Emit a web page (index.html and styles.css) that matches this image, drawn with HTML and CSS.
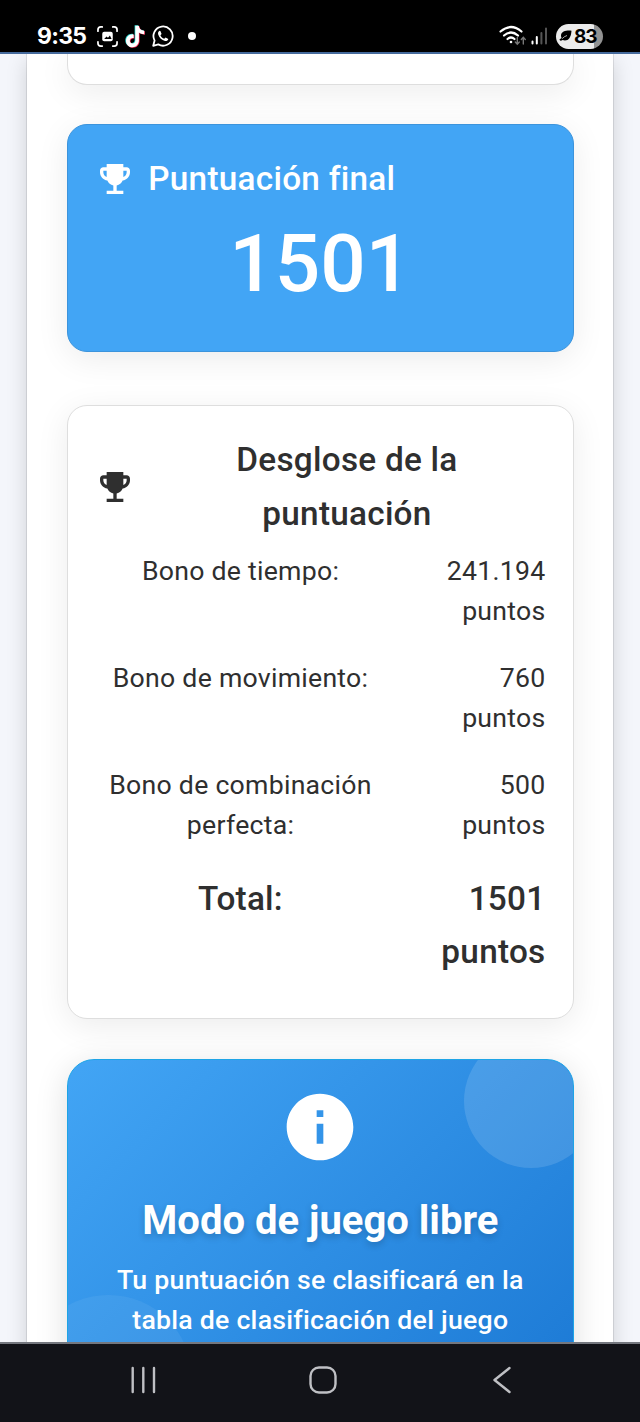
FILE: index.html
```html
<!DOCTYPE html>
<html lang="es">
<head>
<meta charset="utf-8">
<title>Puntuación final</title>
<link rel="stylesheet" href="styles.css">
</head>
<body>
<div class="phone">
  <header class="status">
    <div class="status-left">
      <span class="clock">9:35</span>
      <svg class="s-shot" viewBox="0 0 22 22" fill="none" stroke="#fff" stroke-width="1.8" stroke-linecap="round">
        <path d="M1 5.500V4q0-3 3-3h1.500M16.500 1H18q3 0 3 3v1.500M21 16.500V18q0 3-3 3h-1.500M5.500 21H4q-3 0-3-3v-1.500"/>
        <rect x="5.500" y="6" width="11" height="10" rx="2" fill="#fff" stroke="none"/>
        <path d="M7.500 13.500l2.500-2.500 1.500 1.200 2-2.200 1.800 3.500z" fill="#000" stroke="none"/>
      </svg>
      <svg class="s-tiktok" viewBox="0 0 20 23">
        <path fill="#25d9d2" d="M9.600.2h3.500c.2 2.700 2 4.700 5.400 5v3.500c-2 0-3.800-.7-5.300-1.700v7.800c0 4.200-3 7-6.500 7S.3 19 .3 15.400c0-4 3.400-7 7.600-6.500v3.700c-2.100-.6-3.800.8-3.800 2.700 0 1.700 1.300 2.800 2.700 2.800 1.600 0 2.800-1.200 2.800-3z"/>
        <path fill="#fe2c55" d="M11 1.200h3.500c.2 2.700 2 4.700 5.400 5v3.500c-2 0-3.800-.7-5.300-1.700v7.800c0 4.200-3 7-6.500 7S1.700 20 1.700 16.400c0-4 3.400-7 7.600-6.500v3.700c-2.100-.6-3.800.8-3.800 2.700 0 1.700 1.300 2.800 2.700 2.800 1.600 0 2.800-1.200 2.800-3z"/>
        <path fill="#fff" d="M10.300.7h3.500c.2 2.700 2 4.700 5.400 5v3.500c-2 0-3.800-.7-5.300-1.700v7.800c0 4.200-3 7-6.500 7S1 19.500 1 15.900c0-4 3.400-7 7.600-6.500v3.700c-2.100-.6-3.800.8-3.800 2.700 0 1.700 1.300 2.800 2.700 2.800 1.600 0 2.800-1.200 2.800-3z"/>
      </svg>
      <svg class="s-wa" viewBox="0 0 22 22">
        <path d="M1.200 20.800l1.400-5.200a9.600 9.600 0 1 1 3.700 3.800z" fill="none" stroke="#fff" stroke-width="1.800" stroke-linejoin="round"/>
        <path d="M7.500 5.800c-1.200.7-1.800 2-1.300 3.700 1 3.200 3.600 5.700 6.800 6.500 1.500.3 3-.5 3.300-2.100l-2.700-1.500-1.400 1.400c-1.700-.7-3.100-2-3.800-3.600l1.200-1.300-1.200-2.900z" fill="#fff"/>
      </svg>
      <span class="dot"></span>
    </div>
    <div class="status-right">
      <svg class="s-wifi" viewBox="0 0 28 22" fill="none" stroke="#fff" stroke-width="2.200" stroke-linecap="round">
        <path d="M1.500 6.500Q12 -2.500 22.500 6.500M5 10.500Q12 4.500 19 10.500M8.500 14Q12 11 15.500 14"/>
        <circle cx="12" cy="17" r="1.300" fill="#fff" stroke="none"/>
        <path d="M18.300 12.500v6.500M16.300 17l2 2.200 2-2.200M24.300 19v-6.500M22.300 14.500l2-2.200 2 2.200" stroke="#777" stroke-width="1.400"/>
      </svg>
      <svg class="s-signal" viewBox="0 0 17 18" stroke-linecap="round" stroke-width="2">
        <path d="M1.500 14.500v2M5.800 10v6.500" stroke="#fff"/>
        <path d="M10.400 6v10.500M15 1.500v15" stroke="#555"/>
      </svg>
      <div class="battery">
        <svg class="leaf" viewBox="0 0 13 12"><path d="M12.500.7C7 .2 2.500 1.500 2 5.200c-.1 1.200.2 2 .6 2.800L.4 9.500q.5 2 3.200.5C8 11.600 12 9 12.500.7z" fill="#000"/><path d="M3.200 8.700Q5 6.500 8 5.500" stroke="#eee" stroke-width=".7" fill="none"/></svg>
        <span>83</span>
      </div>
    </div>
  </header>

  <main class="screen">
    <div class="paper">
      <section class="card card-previous"></section>

      <section class="card card-final">
        <div class="heading">
          <svg class="trophy" viewBox="0 0 24 24"><path d="M19 5h-2V3H7v2H5c-1.100 0-2 .9-2 2v1c0 2.550 1.920 4.630 4.390 4.940.63 1.500 1.980 2.630 3.610 2.960V19H7v2h10v-2h-4v-3.100c1.630-.33 2.980-1.460 3.610-2.960C19.080 12.630 21 10.550 21 8V7c0-1.100-.9-2-2-2zM5 8V7h2v3.820C5.840 10.400 5 9.300 5 8zm14 0c0 1.300-.84 2.400-2 2.820V7h2v1z"/></svg>
          <h2 class="title">Puntuación final</h2>
        </div>
        <div class="score">1501</div>
      </section>

      <section class="card card-breakdown">
        <div class="heading">
          <svg class="trophy" viewBox="0 0 24 24"><path d="M19 5h-2V3H7v2H5c-1.100 0-2 .9-2 2v1c0 2.550 1.920 4.630 4.390 4.940.63 1.500 1.980 2.630 3.610 2.960V19H7v2h10v-2h-4v-3.100c1.630-.33 2.980-1.460 3.610-2.960C19.080 12.630 21 10.550 21 8V7c0-1.100-.9-2-2-2zM5 8V7h2v3.820C5.840 10.400 5 9.300 5 8zm14 0c0 1.300-.84 2.400-2 2.820V7h2v1z"/></svg>
          <h2 class="title title-wide">Desglose de la puntuación</h2>
        </div>
        <div class="rows">
          <span class="label">Bono de tiempo:</span><span class="value">241.194 puntos</span>
          <span class="label">Bono de movimiento:</span><span class="value">760<br>puntos</span>
          <span class="label">Bono de combinación perfecta:</span><span class="value">500<br>puntos</span>
          <span class="label total">Total:</span><span class="value total">1501 puntos</span>
        </div>
      </section>

      <section class="card card-mode">
        <span class="bubble bubble-top"></span>
        <span class="bubble bubble-bottom"></span>
        <svg class="info" viewBox="0 0 24 24"><path d="M12 2C6.480 2 2 6.480 2 12s4.480 10 10 10 10-4.480 10-10S17.520 2 12 2zm1 15h-2v-6h2v6zm0-8h-2V7h2v2z"/></svg>
        <h2 class="mode-title">Modo de juego libre</h2>
        <p class="mode-text">Tu puntuación se clasificará en la tabla de clasificación del juego</p>
      </section>
    </div>
  </main>

  <nav class="navbar">
    <svg viewBox="0 0 28 28"><path d="M3.700 2v24M14.300 2v24M25 2v24"/></svg>
    <svg viewBox="0 0 28 28"><rect x="1.500" y="1.500" width="25" height="25" rx="8.500"/></svg>
    <svg viewBox="0 0 28 28"><path d="M21.500 2L6.500 14l15 12"/></svg>
  </nav>
</div>
</body>
</html>
```
FILE: styles.css
```css
* { box-sizing: border-box; }

body {
  margin: 0;
  font-family: Roboto, "Liberation Sans", sans-serif;
  color: #2f2f2f;
  background: #f4f6fb;
}

.phone {
  width: 640px;
  height: 1422px;
  display: flex;
  flex-direction: column;
  overflow: hidden;
}

/* Status bar */
.status {
  flex: none;
  height: 54px;
  padding: 20px 37px 0 37px;
  display: flex;
  justify-content: space-between;
  align-items: center;
  background: #000;
  border-bottom: 2px solid #456a9c;
  color: #fff;
}
.status-left, .status-right { display: flex; align-items: center; }
.clock {
  width: 50px;
  margin-right: 10px;
  font: 700 23px/30px Inter, sans-serif;
  letter-spacing: -0.7px;
  white-space: nowrap;
}
.s-shot { width: 21px; height: 21px; margin-right: 7px; }
.s-tiktok { width: 20px; height: 23px; margin-right: 7px; }
.s-wa { width: 22px; height: 22px; }
.dot { width: 8px; height: 8px; margin-left: 14px; border-radius: 50%; background: #fff; }
.s-wifi { width: 28px; height: 22px; margin-right: 4px; }
.s-signal { width: 17px; height: 18px; margin-right: 8px; }
.battery {
  width: 47px;
  height: 25px;
  padding-left: 3px;
  display: flex;
  align-items: center;
  gap: 2px;
  border-radius: 13px;
  background: linear-gradient(90deg, #ebebeb 38px, #929292 38px);
  color: #000;
  font: 700 19px/25px Inter, sans-serif;
  letter-spacing: -1.2px;
}
.leaf { width: 13px; height: 12px; }

/* Page */
.screen {
  flex: 1;
  min-height: 0;
  overflow: hidden;
  padding: 0 27px;
}
.paper {
  height: 1400px;
  padding: 0 39.4px 0 40px;
  background: #fff;
  box-shadow: 0 0 0 1px rgba(0, 0, 0, .09), 0 7px 20px rgba(0, 0, 0, .16);
}

.card {
  border: 1px solid #dedede;
  border-radius: 20px;
  background: #fff;
  box-shadow: 0 7px 33px rgba(0, 0, 0, .08);
  padding: 27px;
}
.card-previous {
  height: 30.500px;
  border-top: 0;
  border-radius: 0 0 20px 20px;
  padding: 0;
  margin-bottom: 39.500px;
}
.card-final {
  height: 228px;
  margin-bottom: 53.400px;
  background: #42a5f5;
  border-color: #3c94dc;
  color: #fff;
}
.card-breakdown {
  height: 613.600px;
  margin-bottom: 40.500px;
}

.heading {
  display: flex;
  align-items: center;
  gap: 13.3px;
  margin-bottom: 11.7px;
}
.card-breakdown .heading { margin-bottom: 11.1px; }
.trophy { flex: none; width: 40px; height: 40px; fill: currentColor; }
.title {
  margin: 0;
  font-size: 33.33px;
  font-weight: 500;
  line-height: 53.33px;
  letter-spacing: .0075em;
}
.title-wide { flex: 1; text-align: center; }
.score {
  font-size: 80px;
  font-weight: 500;
  line-height: 94.6px;
  text-align: center;
}

.rows {
  display: grid;
  grid-template-columns: 291px 132.8px;
  gap: 26.8px 26.67px;
  font-size: 26.67px;
  line-height: 40px;
  letter-spacing: .00938em;
}
.label { text-align: center; }
.value { text-align: right; }
.total {
  font-size: 33.33px;
  font-weight: 500;
  line-height: 53.33px;
  letter-spacing: .0075em;
}

.card-mode {
  position: relative;
  height: 400px;
  padding: 27px 39px;
  overflow: hidden;
  border-color: #1ea4e6;
  border-radius: 27px;
  background: linear-gradient(135deg, #42a5f5 0%, #1976d2 100%);
  box-shadow: 0 7px 33px rgba(0, 0, 0, .13);
  color: #fff;
  text-align: center;
}
.bubble { position: absolute; border-radius: 50%; }
.bubble-top {
  width: 134px;
  height: 134px;
  top: -26px;
  right: -25.4px;
  background: rgba(255, 255, 255, .13);
}
.bubble-bottom {
  width: 167px;
  height: 167px;
  top: 235px;
  left: -43px;
  background: rgba(255, 255, 255, .06);
}
.info { display: block; width: 80px; height: 80px; margin: 0 auto 27px; fill: #fff; }
.mode-title {
  margin: 0 0 12px;
  font-size: 40px;
  font-weight: 700;
  line-height: 54px;
  text-shadow: 0 3px 7px rgba(0, 0, 0, .2);
}
.mode-text {
  margin: 0;
  font-size: 26.67px;
  font-weight: 500;
  line-height: 40px;
  letter-spacing: .00938em;
}

/* System navigation */
.navbar {
  flex: none;
  height: 80px;
  padding: 0 124px 6px 129px;
  display: flex;
  justify-content: space-between;
  align-items: center;
  background: #121318;
  border-top: 2px solid #74777e;
}
.navbar svg {
  width: 28px;
  height: 28px;
  fill: none;
  stroke: #bfc0c4;
  stroke-width: 2.4;
  stroke-linecap: round;
  stroke-linejoin: round;
}
```
